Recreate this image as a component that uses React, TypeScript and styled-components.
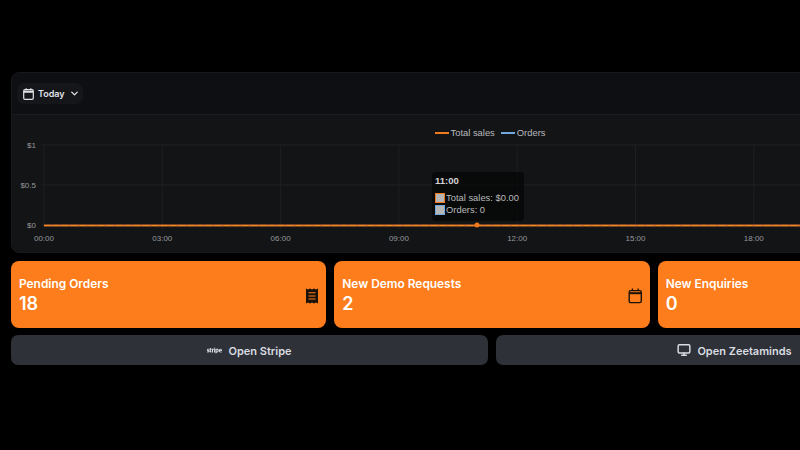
import React from "react";
import styled, { createGlobalStyle } from "styled-components";
import { ChevronDown, Monitor } from "lucide-react";
import { FaStripe } from "react-icons/fa";

const GlobalStyle = createGlobalStyle`
  *, *::before, *::after {
    box-sizing: border-box;
  }
  html, body {
    margin: 0;
    padding: 0;
    background: #000;
    overflow: hidden;
  }
  body {
    font-family: "Inter", "Liberation Sans", sans-serif;
  }
`;

const Page = styled.div`
  width: 962px;
  margin-left: 11px;
  padding-top: 72px;
  display: flex;
  flex-direction: column;
  gap: 8px;
`;

const ChartPanel = styled.section`
  background: #131416;
  border: 1px solid #17181b;
  border-radius: 8px;
  height: 181px;
  overflow: hidden;
`;

const PanelHeader = styled.header`
  height: 42px;
  padding: 10px 5px;
  background: #0e0f12;
  border-bottom: 1px solid #1b1c1f;
  display: flex;
  align-items: flex-start;
`;

const RangeButton = styled.button`
  width: 66px;
  height: 21px;
  padding: 0 0 0 6px;
  display: flex;
  align-items: center;
  gap: 4px;
  background: #14161a;
  border: none;
  border-radius: 7px;
  color: #e2e4e8;
  font: 600 9px "Inter", sans-serif;

  svg {
    flex: none;
  }
`;

const ChartArea = styled.div`
  position: relative;
  height: 138px;
`;

const Legend = styled.div`
  position: absolute;
  top: 12px;
  left: 0;
  right: 4px;
  display: flex;
  justify-content: center;
  gap: 6px;
  font: 9.4px/12px "Liberation Sans", sans-serif;
  color: #b8b9bc;
`;

const LegendItem = styled.span<{ $color: string }>`
  display: flex;
  align-items: center;
  gap: 2px;

  &::before {
    content: "";
    width: 14px;
    height: 2px;
    background: ${(p) => p.$color};
  }
`;

const Plot = styled.svg`
  display: block;

  text {
    font: 8px "Liberation Sans", sans-serif;
    fill: #96989d;
  }
`;

const Tooltip = styled.div`
  position: absolute;
  left: 420px;
  top: 57px;
  width: 92px;
  height: 49px;
  padding: 3px 3px;
  background: rgba(0, 0, 0, 0.55);
  border-radius: 4px;
  font: 9.4px/12px "Liberation Sans", sans-serif;
  color: #b8b9bb;
`;

const TooltipTitle = styled.div`
  font-weight: 700;
  font-size: 9.5px;
  color: #d4d5d6;
  margin-bottom: 5px;
`;

const TooltipRow = styled.div<{ $color: string }>`
  display: flex;
  align-items: center;
  white-space: nowrap;

  &::before {
    content: "";
    flex: none;
    width: 10px;
    height: 10px;
    margin-right: 1px;
    background: #b5b5b5;
    border: 1.5px solid ${(p) => p.$color};
  }
`;

const CardRow = styled.div`
  display: grid;
  grid-template-columns: repeat(3, 1fr);
  gap: 8px;
`;

const Card = styled.div`
  height: 67px;
  padding: 14px 8px;
  background: #fd7c1b;
  border-radius: 8px;
  display: flex;
  justify-content: space-between;
  align-items: center;
`;

const CardText = styled.div`
  padding-top: 3px;
  color: #fff;
`;

const CardLabel = styled.div`
  font-weight: 600;
  font-size: 11.9px;
  line-height: 15px;
`;

const CardValue = styled.div`
  font-weight: 600;
  font-size: 18px;
  line-height: 26px;
`;

const CardIcon = styled.svg`
  width: 14px;
  height: 16px;
  margin-top: 2px;
  color: #1a1208;
  flex: none;
`;

const LinkRow = styled.div`
  display: grid;
  grid-template-columns: repeat(2, 1fr);
  gap: 8px;
  margin-top: -1px;
`;

const LinkButton = styled.button`
  height: 30px;
  padding: 2px 0 0;
  background: #2e3138;
  border: none;
  border-radius: 7px;
  color: #d9dce0;
  font: 600 11px "Inter", sans-serif;
  display: flex;
  align-items: center;
  justify-content: center;
  gap: 6px;

  svg {
    margin-top: -2px;
  }
`;

const CalendarGlyph = () => (
  <svg width={11} height={12} viewBox="0 0 11 12" fill="none" stroke="currentColor">
    <rect x="0.7" y="1.7" width="9.6" height="9.6" rx="1.3" strokeWidth="1.2" />
    <path d="M1 3.8h9" strokeWidth="2" />
    <path d="M3.2 0.3v2M7.8 0.3v2" strokeWidth="1.1" />
  </svg>
);

const hours = ["00:00", "03:00", "06:00", "09:00", "12:00", "15:00", "18:00"];
const left = 32;
const step = 118.3;

const LineChart = () => (
  <Plot width={962} height={138}>
    {[30, 70, 110].map((y) => (
      <line key={y} x1={left - 3} x2={962} y1={y} y2={y} stroke="#1f2023" />
    ))}
    {hours.map((h, i) => (
      <g key={h}>
        <line x1={left + i * step} x2={left + i * step} y1={30} y2={114} stroke="#1e1f22" />
        <text x={left + i * step} y={126} textAnchor="middle">{h}</text>
      </g>
    ))}
    <text x={24} y={33} textAnchor="end">$1</text>
    <text x={24} y={73} textAnchor="end">$0.5</text>
    <text x={24} y={113} textAnchor="end">$0</text>
    <line x1={left} x2={962} y1={110.5} y2={110.5} stroke="#e0742a" strokeWidth="2" />
    <line x1={left} x2={962} y1={110.5} y2={110.5} stroke="#f5891f" strokeWidth="1" strokeDasharray="6 3" />
    <circle cx={465} cy={110} r={2.5} fill="#f07a1c" />
  </Plot>
);

const ReceiptIcon = () => (
  <CardIcon viewBox="0 0 14 16">
    <path
      fill="currentColor"
      fillRule="evenodd"
      d="M2 0.5l2 1 2-1 2 1 2-1 2 1 2-1v15l-2-1-2 1-2-1-2 1-2-1-2 1zM4.5 4.2v1h7v-1zM4.5 7.4v1h7v-1zM4.5 10.6v1h7v-1z"
    />
  </CardIcon>
);

const CalendarIcon = () => (
  <CardIcon viewBox="0 0 14 16" fill="none" stroke="currentColor">
    <rect x="1.2" y="2.6" width="12.1" height="12" rx="1.6" strokeWidth="1.4" />
    <path d="M1.5 5.2h11.5" strokeWidth="2" />
    <path d="M4.4 0.6v2.4M10.2 0.6v2.4" strokeWidth="1.3" />
  </CardIcon>
);

const stats = [
  { label: "Pending Orders", value: 18, icon: <ReceiptIcon /> },
  { label: "New Demo Requests", value: 2, icon: <CalendarIcon /> },
  { label: "New Enquiries", value: 0, icon: <CalendarIcon /> },
];

export default function App() {
  return (
    <>
      <GlobalStyle />
      <Page>
        <ChartPanel>
          <PanelHeader>
            <RangeButton>
              <CalendarGlyph />
              Today
              <ChevronDown size={11} strokeWidth={3} />
            </RangeButton>
          </PanelHeader>
          <ChartArea>
            <LineChart />
            <Legend>
              <LegendItem $color="#f07a1c">Total sales</LegendItem>
              <LegendItem $color="#6fa8dc">Orders</LegendItem>
            </Legend>
            <Tooltip>
              <TooltipTitle>11:00</TooltipTitle>
              <TooltipRow $color="#f07a1c">Total sales: $0.00</TooltipRow>
              <TooltipRow $color="#6fa8dc">Orders: 0</TooltipRow>
            </Tooltip>
          </ChartArea>
        </ChartPanel>
        <CardRow>
          {stats.map((s) => (
            <Card key={s.label}>
              <CardText>
                <CardLabel>{s.label}</CardLabel>
                <CardValue>{s.value}</CardValue>
              </CardText>
              {s.icon}
            </Card>
          ))}
        </CardRow>
        <LinkRow>
          <LinkButton>
            <FaStripe size={15} />
            Open Stripe
          </LinkButton>
          <LinkButton>
            <Monitor size={14} strokeWidth={2.5} />
            Open Zeetaminds
          </LinkButton>
        </LinkRow>
      </Page>
    </>
  );
}
